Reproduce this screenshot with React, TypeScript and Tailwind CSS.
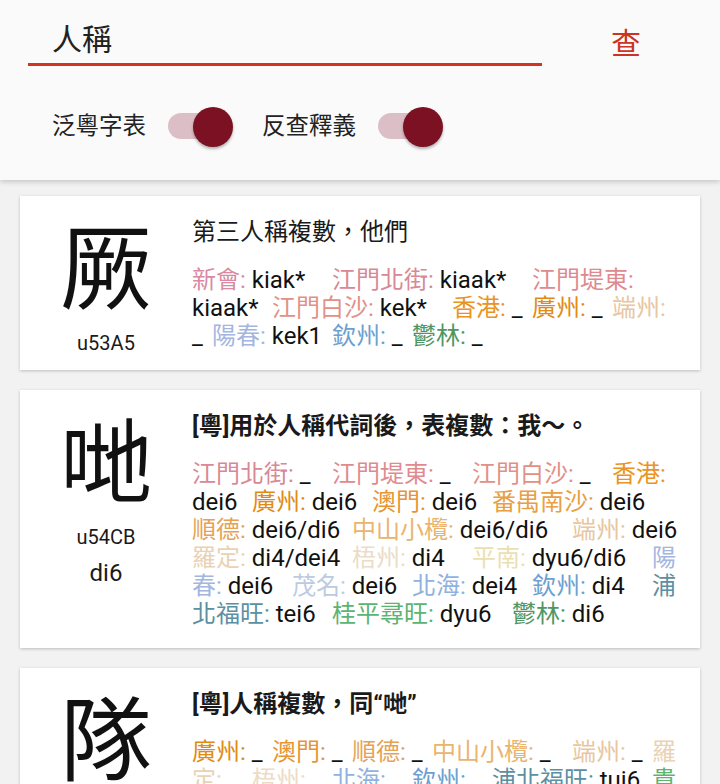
import React from "react";

type Entry = { name: string; color: string; pron: string };

const C = {
  sanwui: "#d98aa2",
  bakgaai: "#d98896",
  taidung: "#df8a8f",
  baksaa: "#e29086",
  hk: "#ea9422",
  gz: "#df8c14",
  mac: "#e69532",
  naamsaa: "#e8a042",
  shunde: "#e6a254",
  siulaam: "#eab46e",
  zyucau: "#e8c69e",
  lodeng: "#ead2b4",
  ngcau: "#ecdcc6",
  pingnaam: "#ebdfb2",
  joengceon: "#a4b6e0",
  maumeng: "#bccbe2",
  bakhoi: "#90b2de",
  jamcau: "#6ca0d0",
  fuktong: "#5d8fa2",
  camwong: "#5db372",
  watlam: "#4f9664",
};

const cards: {
  char: string;
  code: string;
  jyut?: string;
  title: string;
  bold: boolean;
  entries: Entry[];
}[] = [
  {
    char: "厥",
    code: "u53A5",
    title: "第三人稱複數，他們",
    bold: false,
    entries: [
      { name: "新會", color: C.sanwui, pron: "kiak*" },
      { name: "江門北街", color: C.bakgaai, pron: "kiaak*" },
      { name: "江門堤東", color: C.taidung, pron: "kiaak*" },
      { name: "江門白沙", color: C.baksaa, pron: "kek*" },
      { name: "香港", color: C.hk, pron: "_" },
      { name: "廣州", color: C.gz, pron: "_" },
      { name: "端州", color: C.zyucau, pron: "_" },
      { name: "陽春", color: C.joengceon, pron: "kek1" },
      { name: "欽州", color: C.jamcau, pron: "_" },
      { name: "鬱林", color: C.watlam, pron: "_" },
    ],
  },
  {
    char: "哋",
    code: "u54CB",
    jyut: "di6",
    title: "[粵]用於人稱代詞後，表複數：我～。",
    bold: true,
    entries: [
      { name: "江門北街", color: C.bakgaai, pron: "_" },
      { name: "江門堤東", color: C.taidung, pron: "_" },
      { name: "江門白沙", color: C.baksaa, pron: "_" },
      { name: "香港", color: C.hk, pron: "dei6" },
      { name: "廣州", color: C.gz, pron: "dei6" },
      { name: "澳門", color: C.mac, pron: "dei6" },
      { name: "番禺南沙", color: C.naamsaa, pron: "dei6" },
      { name: "順德", color: C.shunde, pron: "dei6/di6" },
      { name: "中山小欖", color: C.siulaam, pron: "dei6/di6" },
      { name: "端州", color: C.zyucau, pron: "dei6" },
      { name: "羅定", color: C.lodeng, pron: "di4/dei4" },
      { name: "梧州", color: C.ngcau, pron: "di4" },
      { name: "平南", color: C.pingnaam, pron: "dyu6/di6" },
      { name: "陽春", color: C.joengceon, pron: "dei6" },
      { name: "茂名", color: C.maumeng, pron: "dei6" },
      { name: "北海", color: C.bakhoi, pron: "dei4" },
      { name: "欽州", color: C.jamcau, pron: "di4" },
      { name: "浦北福旺", color: C.fuktong, pron: "tei6" },
      { name: "桂平尋旺", color: C.camwong, pron: "dyu6" },
      { name: "鬱林", color: C.watlam, pron: "di6" },
    ],
  },
  {
    char: "隊",
    code: "u968A",
    jyut: "deoi6",
    title: "[粵]人稱複數，同“哋”",
    bold: true,
    entries: [
      { name: "廣州", color: C.gz, pron: "_" },
      { name: "澳門", color: C.mac, pron: "_" },
      { name: "順德", color: C.shunde, pron: "_" },
      { name: "中山小欖", color: C.siulaam, pron: "_" },
      { name: "端州", color: C.zyucau, pron: "_" },
      { name: "羅定", color: C.lodeng, pron: "_" },
      { name: "梧州", color: C.ngcau, pron: "_" },
      { name: "北海", color: C.bakhoi, pron: "_" },
      { name: "欽州", color: C.jamcau, pron: "_" },
      { name: "浦北福旺", color: C.fuktong, pron: "tui6" },
      { name: "貴港", color: C.camwong, pron: "_" },
      { name: "鬱林", color: C.watlam, pron: "_" },
    ],
  },
];

const Toggle = () => (
  <div className="relative w-[65px] h-[40px] shrink-0">
    <div className="absolute left-0 top-[6px] w-[58px] h-[26px] rounded-full bg-[#dcbfc6]" />
    <div className="absolute right-0 top-0 w-[40px] h-[40px] rounded-full bg-[#7b1122] shadow-[0_2px_3px_rgba(0,0,0,0.3)]" />
  </div>
);

export default function App() {
  return (
    <div
      className="min-h-screen bg-[#f2f2f2] text-[#1a1a1a]"
      style={{ fontFamily: "Roboto, 'Noto Sans CJK TC', sans-serif" }}
    >
      <header className="relative z-10 h-[180px] bg-[#fafafa] shadow-[0_2px_5px_rgba(0,0,0,0.18)]">
        <div className="flex items-end pt-[18px]">
          <div className="ml-[28px] w-[514px] h-[48px] border-b-[3px] border-[#d2341f] pl-[24px] text-[30px] leading-[44px] text-[#222]">
            人稱
          </div>
          <button className="flex-1 h-[48px] text-[30px] leading-[52px] text-[#cc3322] text-center pr-[10px]">
            查
          </button>
        </div>
        <div className="mt-[41px] flex items-center pl-[52px] h-[40px] text-[23.5px] text-[#222]">
          <span>泛粵字表</span>
          <div className="ml-[22px]">
            <Toggle />
          </div>
          <span className="ml-[29px]">反查釋義</span>
          <div className="ml-[22px]">
            <Toggle />
          </div>
        </div>
      </header>

      <main className="px-[20px] pt-[16px] flex flex-col gap-[20px] pb-[20px]">
        {cards.map((c) => (
          <div
            key={c.code}
            className="flex items-start bg-white shadow-[0_1px_3px_rgba(0,0,0,0.22)]"
          >
            <div className="w-[172px] shrink-0 flex flex-col items-center pt-[27px] pb-[12px]">
              <div className="text-[92px] leading-[96px] text-[#111]">{c.char}</div>
              <div className="mt-[12px] text-[20px] leading-[24px]">{c.code}</div>
              {c.jyut && (
                <div className="mt-[8px] text-[24px] leading-[32px]">{c.jyut}</div>
              )}
            </div>
            <div className="flex-1 py-[20px] pr-[20px] min-w-0">
              <div
                className={`text-[24px] leading-[32px] ${c.bold ? "font-bold" : ""}`}
              >
                {c.title}
              </div>
              <p className="mt-[18px] text-[24px] leading-[28px] whitespace-pre-wrap [tab-size:20px]">
                {c.entries.map((e, i) => (
                  <span key={i}>
                    <span style={{ color: e.color }}>{e.name}:</span>
                    <span className="text-[#111]">{" " + e.pron + " \t"}</span>
                  </span>
                ))}
              </p>
            </div>
          </div>
        ))}
      </main>
    </div>
  );
}
